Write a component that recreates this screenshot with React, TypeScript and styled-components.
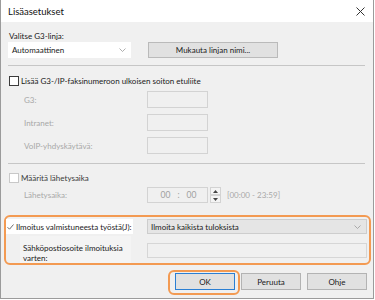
import styled, { createGlobalStyle } from 'styled-components';

const ORANGE = '#f39a52';

const GlobalStyle = createGlobalStyle`
  html, body {
    margin: 0;
    padding: 0;
    background: #ffffff;
  }
  #root {
    width: 375px;
    height: 300px;
    overflow: hidden;
  }
`;

const Window = styled.div`
  box-sizing: border-box;
  width: 374px;
  height: 299px;
  border: 1px solid #9b9b9b;
  border-top: none;
  display: flex;
  flex-direction: column;
  font-family: Lato, 'Liberation Sans', Arial, sans-serif;
  font-size: 8px;
  color: #1a1a1a;
  white-space: nowrap;
`;

const TitleBar = styled.div`
  flex: none;
  height: 22px;
  background: #ffffff;
  display: flex;
  align-items: center;
  justify-content: space-between;
  padding: 0 8px 0 7px;
  font-size: 9.5px;
  color: #111;
`;

const Body = styled.div`
  flex: 1;
  background: #f0f0f0;
  padding: 0 7px;
  display: flex;
  flex-direction: column;
`;

const FieldLabel = styled.div`
  margin-top: 9px;
  line-height: 11px;
  padding-left: 1px;
`;

const TopRow = styled.div`
  display: flex;
  align-items: center;
  height: 16px;
  gap: 17px;
`;

const Select = styled.div<{ $width?: number; $disabled?: boolean }>`
  box-sizing: border-box;
  ${(p) => (p.$width ? `width: ${p.$width}px;` : 'flex: 1;')}
  height: 100%;
  display: flex;
  align-items: center;
  justify-content: space-between;
  padding: 0 4px 0 3px;
  background: ${(p) => (p.$disabled ? '#e5e5e5' : '#ffffff')};
  border: 1px solid ${(p) => (p.$disabled ? '#cdcdcd' : '#ffffff')};
`;

const PushButton = styled.button`
  box-sizing: border-box;
  width: 130px;
  height: 16px;
  padding: 0;
  background: #e1e1e1;
  border: 1px solid #bababa;
  font: inherit;
  color: inherit;
`;

const Separator = styled.div<{ $top: number }>`
  margin-top: ${(p) => p.$top}px;
  margin-right: 1px;
  height: 1px;
  background: #c6c6c6;
`;

const CheckRow = styled.label<{ $top: number; $muted?: boolean }>`
  display: flex;
  align-items: center;
  gap: 2px;
  height: 13px;
  margin-top: ${(p) => p.$top}px;
  color: ${(p) => (p.$muted ? '#3a3a3a' : 'inherit')};
`;

const CheckBox = styled.span<{ $faint?: boolean }>`
  box-sizing: border-box;
  width: 10px;
  height: 10px;
  margin-left: 1px;
  background: #ffffff;
  border: 1px solid ${(p) => (p.$faint ? '#c8c8c8' : '#3c3c3c')};
`;

const DimGrid = styled.div`
  display: grid;
  grid-template-columns: 139px 61px;
  grid-auto-rows: 17px;
  row-gap: 6px;
  margin-top: 4px;
  align-items: center;
`;

const DimLabel = styled.span<{ $width?: number }>`
  padding-left: 16px;
  color: #a8a8a8;
  ${(p) => (p.$width ? `box-sizing: border-box; width: ${p.$width}px;` : '')}
`;

const DimInput = styled.div`
  box-sizing: border-box;
  height: 100%;
  background: #f0f0f0;
  border: 1px solid #d3d3d3;
`;

const TimeRow = styled.div`
  display: flex;
  align-items: center;
  height: 16px;
  margin-top: 3px;
`;

const TimeBox = styled.div`
  box-sizing: border-box;
  width: 61px;
  height: 100%;
  border: 1px solid #d3d3d3;
  display: flex;
  align-items: center;
  justify-content: center;
  gap: 7px;
  padding-left: 2px;
  color: #a0a0a0;
  font-size: 8.5px;
`;

const Spinner = styled.div`
  margin-left: 2px;
  width: 11px;
  height: 100%;
  display: flex;
  flex-direction: column;
`;

const SpinHalf = styled.div`
  box-sizing: border-box;
  flex: 1;
  border: 1px solid #d3d3d3;
  background: #f4f4f4;
  display: flex;
  align-items: center;
  justify-content: center;
`;

const RangeText = styled.span`
  margin-left: 6px;
  color: #a8a8a8;
`;

const FocusGroup = styled.div`
  margin: 12px -5px 0 -4px;
  border: 2px solid ${ORANGE};
  border-radius: 6px;
  padding: 2px 2px 0 0;
  display: flex;
  flex-direction: column;
`;

const GroupRow = styled.div<{ $top?: number }>`
  display: flex;
  align-items: flex-start;
  margin-top: ${(p) => p.$top ?? 0}px;
`;

const NotifyLabel = styled.label`
  box-sizing: border-box;
  width: 127px;
  height: 15px;
  background: #ffffff;
  display: flex;
  align-items: center;
  gap: 2px;
  margin-right: 14px;
`;

const TickBox = styled.span`
  width: 8px;
  height: 10px;
  display: flex;
  align-items: center;
  justify-content: center;
`;

const GroupSelect = styled(Select)`
  height: 15px;
  padding: 0 5px 0 3px;
`;

const EmailLabel = styled.div`
  box-sizing: border-box;
  width: 111px;
  height: 27px;
  margin-left: 14px;
  padding: 7px 0 0 3px;
  line-height: 10px;
  background: #f4f4f4;
`;

const EmailInput = styled.div`
  box-sizing: border-box;
  flex: 1;
  height: 15px;
  margin: 7px 0 0 16px;
  background: #f0f0f0;
  border: 1px solid #d6d6d6;
`;

const ButtonRow = styled.div`
  display: flex;
  justify-content: flex-end;
  gap: 6px;
  margin: 8px -1px 0 0;
`;

const DialogButton = styled.button<{ $primary?: boolean }>`
  position: relative;
  box-sizing: border-box;
  width: 60px;
  height: 17px;
  padding: 0;
  background: #e1e1e1;
  border: 1px solid ${(p) => (p.$primary ? '#2b7fd3' : '#b3b3b3')};
  font: inherit;
  color: inherit;

  ${(p) =>
    p.$primary &&
    `
    &::after {
      content: '';
      position: absolute;
      top: -4px;
      bottom: -6px;
      left: -8px;
      right: -6px;
      border: 2px solid ${ORANGE};
      border-radius: 6px;
      pointer-events: none;
    }
  `}
`;

const Chevron = () => (
  <svg width="7" height="4" viewBox="0 0 7 4">
    <path d="M0.5 0.5 L3.5 3.5 L6.5 0.5" fill="none" stroke="#9a9a9a" strokeWidth="0.8" />
  </svg>
);

const CloseIcon = () => (
  <svg width="9" height="9" viewBox="0 0 9 9">
    <path d="M0.5 0.5 L8.5 8.5 M8.5 0.5 L0.5 8.5" stroke="#333" strokeWidth="1" />
  </svg>
);

const Tick = () => (
  <svg width="7" height="6" viewBox="0 0 7 6">
    <path d="M0.5 3.2 L2.5 5.2 L6.5 0.5" fill="none" stroke="#6e6e6e" strokeWidth="1" />
  </svg>
);

const Arrow = ({ up }: { up?: boolean }) => (
  <svg width="5" height="3" viewBox="0 0 5 3">
    <path d={up ? 'M0 3 L2.5 0 L5 3 Z' : 'M0 0 L2.5 3 L5 0 Z'} fill="#444" />
  </svg>
);

function App() {
  return (
    <>
      <GlobalStyle />
      <Window>
        <TitleBar>
          <span>Lisäasetukset</span>
          <CloseIcon />
        </TitleBar>
        <Body>
          <FieldLabel>Valitse G3-linja:</FieldLabel>
          <TopRow>
            <Select $width={123}>
              <span>Automaattinen</span>
              <Chevron />
            </Select>
            <PushButton>Mukauta linjan nimi...</PushButton>
          </TopRow>

          <Separator $top={7} />

          <CheckRow $top={8}>
            <CheckBox />
            <span>Lisää G3-/IP-faksinumeroon ulkoisen soiton etuliite</span>
          </CheckRow>

          <DimGrid>
            <DimLabel>G3:</DimLabel>
            <DimInput />
            <DimLabel>Intranet:</DimLabel>
            <DimInput />
            <DimLabel>VoIP-yhdyskäytävä:</DimLabel>
            <DimInput />
          </DimGrid>

          <Separator $top={9} />

          <CheckRow $top={7} $muted>
            <CheckBox $faint />
            <span>Määritä lähetysaika</span>
          </CheckRow>

          <TimeRow>
            <DimLabel $width={139}>Lähetysaika:</DimLabel>
            <TimeBox>
              <span>00</span>
              <span>:</span>
              <span>00</span>
            </TimeBox>
            <Spinner>
              <SpinHalf>
                <Arrow up />
              </SpinHalf>
              <SpinHalf>
                <Arrow />
              </SpinHalf>
            </Spinner>
            <RangeText>[00:00 - 23:59]</RangeText>
          </TimeRow>

          <FocusGroup>
            <GroupRow>
              <NotifyLabel>
                <TickBox>
                  <Tick />
                </TickBox>
                <span>Ilmoitus valmistuneesta työstä(J):</span>
              </NotifyLabel>
              <GroupSelect $disabled>
                <span>Ilmoita kaikista tuloksista</span>
                <Chevron />
              </GroupSelect>
            </GroupRow>
            <GroupRow $top={2}>
              <EmailLabel>
                Sähköpostiosoite ilmoituksia
                <br />
                varten:
              </EmailLabel>
              <EmailInput />
            </GroupRow>
          </FocusGroup>

          <ButtonRow>
            <DialogButton $primary>OK</DialogButton>
            <DialogButton>Peruuta</DialogButton>
            <DialogButton>Ohje</DialogButton>
          </ButtonRow>
        </Body>
      </Window>
    </>
  );
}

export default App;
